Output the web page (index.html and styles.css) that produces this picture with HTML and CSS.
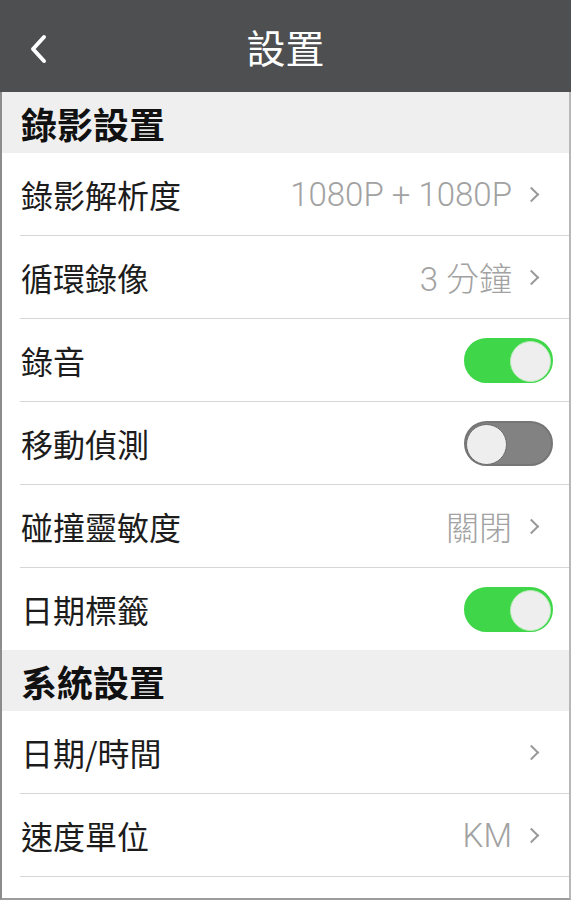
FILE: index.html
```html
<!DOCTYPE html>
<html lang="zh-Hant">
<head>
<meta charset="utf-8">
<title>設置</title>
<link rel="stylesheet" href="styles.css">
</head>
<body>
<div class="screen">
  <header class="topbar">
    <svg class="back" width="20" height="30" viewBox="0 0 20 30"><path d="M15 3 L4 15 L15 27" fill="none" stroke="#fff" stroke-width="4" stroke-linecap="round" stroke-linejoin="round"/></svg>
    <h1 class="title">設置</h1>
  </header>
  <div class="content">
    <div class="section">錄影設置</div>
    <div class="row"><span class="label">錄影解析度</span><span class="value">1080P + 1080P<i class="chev"></i></span></div>
    <div class="row"><span class="label">循環錄像</span><span class="value">3 分鐘<i class="chev"></i></span></div>
    <div class="row"><span class="label">錄音</span><span class="toggle on"></span></div>
    <div class="row"><span class="label">移動偵測</span><span class="toggle off"></span></div>
    <div class="row"><span class="label">碰撞靈敏度</span><span class="value">關閉<i class="chev"></i></span></div>
    <div class="row last"><span class="label">日期標籤</span><span class="toggle on"></span></div>
    <div class="section">系統設置</div>
    <div class="row"><span class="label">日期/時間</span><span class="value"><i class="chev"></i></span></div>
    <div class="row"><span class="label">速度單位</span><span class="value">KM<i class="chev"></i></span></div>
    <div class="row"></div>
  </div>
</div>
</body>
</html>
```
FILE: styles.css
```css
html, body {
  margin: 0;
  padding: 0;
  background: #ffffff;
}
body {
  font-family: Roboto, "Noto Sans CJK TC", sans-serif;
}
.screen {
  width: 571px;
  height: 900px;
  overflow: hidden;
  display: flex;
  flex-direction: column;
}
.topbar {
  height: 92px;
  flex: none;
  background: #4e4f51;
  display: flex;
  align-items: center;
  justify-content: center;
  position: relative;
}
.back {
  position: absolute;
  left: 29px;
  top: 34px;
}
.title {
  margin: 0;
  font-weight: 400;
  font-size: 39px;
  color: #ffffff;
  font-family: "Noto Sans CJK TC", sans-serif;
  line-height: 1;
}
.content {
  flex: 1;
  border-left: 2px solid #8c8c8c;
  border-right: 2px solid #b8b8b8;
  border-bottom: 2px solid #9c9c9c;
  overflow: hidden;
}
.section {
  height: 61px;
  background: #efefef;
  display: flex;
  align-items: center;
  padding-left: 19px;
  font-family: "Noto Sans CJK TC", sans-serif;
  font-weight: 700;
  font-size: 36px;
  color: #111111;
}
.row {
  height: 82px;
  margin-left: 18px;
  padding-right: 15px;
  border-top: 1px solid #d6d6d6;
  display: flex;
  align-items: center;
  justify-content: space-between;
}
.section + .row {
  border-top: none;
}
.label {
  font-family: "Noto Sans CJK TC", sans-serif;
  font-size: 32px;
  color: #1c1c1c;
  padding-left: 1px;
}
.value {
  display: flex;
  align-items: center;
  font-family: Roboto, "Noto Sans CJK TC", sans-serif;
  font-weight: 300;
  font-size: 33px;
  color: #a2a2a2;
  padding-right: 15px;
}
.chev {
  display: inline-block;
  width: 9px;
  height: 9px;
  border-top: 2.5px solid #9a9a9a;
  border-right: 2.5px solid #9a9a9a;
  transform: rotate(45deg);
  margin-left: 14px;
  margin-right: 2px;
}
.toggle {
  position: relative;
  width: 89px;
  height: 45px;
  border-radius: 23px;
  box-sizing: border-box;
  margin-right: 1px;
}
.toggle::after {
  content: "";
  position: absolute;
  top: 1px;
  width: 39px;
  height: 39px;
  border-radius: 50%;
  background: #eeeeee;
}
.toggle.on {
  background: #3fd64a;
  border: 2px solid #3fd64a;
}
.toggle.on::after {
  right: 0;
  border: 1px solid #b7ecb7;
}
.toggle.off {
  background: #828282;
  border: 2px solid #767676;
}
.toggle.off::after {
  left: 0;
  border: 1px solid #6a6a6a;
}
```
